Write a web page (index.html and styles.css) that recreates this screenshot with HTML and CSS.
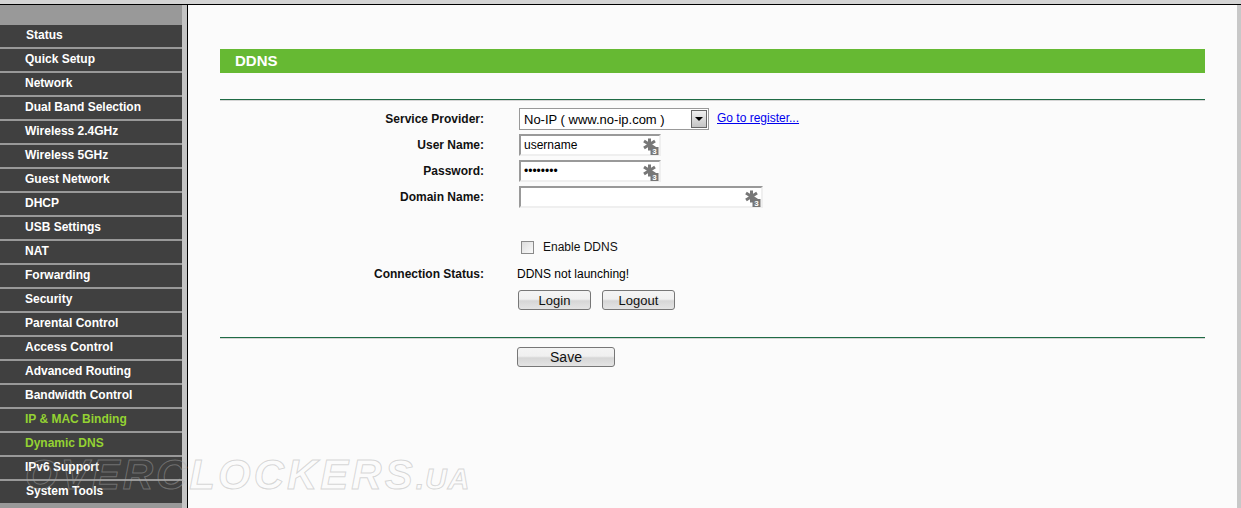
FILE: index.html
```html
<!DOCTYPE html>
<html lang="en">
<head>
    <meta charset="UTF-8">
    <meta name="viewport" content="width=device-width, initial-scale=1.0">
    <title>DDNS</title>
    <link rel="stylesheet" href="styles.css">
</head>
<body>

    <svg width="0" height="0" class="defs">
        <symbol id="key3" viewBox="0 0 16 17">
            <path d="M6.5 0.5v12M1 3l11 7M12 3L1 10" stroke="#777" stroke-width="3" fill="none"/>
            <rect x="7.5" y="9" width="8" height="8" fill="#777"/>
            <text x="11.5" y="16" text-anchor="middle" class="key-num">3</text>
        </symbol>
    </svg>

    <div class="frame">
        <nav class="sidebar">
            <ul class="menu">
                <li class="menu-item shift">Status</li>
                <li class="menu-item">Quick Setup</li>
                <li class="menu-item">Network</li>
                <li class="menu-item">Dual Band Selection</li>
                <li class="menu-item">Wireless 2.4GHz</li>
                <li class="menu-item">Wireless 5GHz</li>
                <li class="menu-item">Guest Network</li>
                <li class="menu-item">DHCP</li>
                <li class="menu-item">USB Settings</li>
                <li class="menu-item">NAT</li>
                <li class="menu-item">Forwarding</li>
                <li class="menu-item">Security</li>
                <li class="menu-item">Parental Control</li>
                <li class="menu-item">Access Control</li>
                <li class="menu-item">Advanced Routing</li>
                <li class="menu-item">Bandwidth Control</li>
                <li class="menu-item active">IP &amp; MAC Binding</li>
                <li class="menu-item active">Dynamic DNS</li>
                <li class="menu-item">IPv6 Support</li>
                <li class="menu-item shift">System Tools</li>
            </ul>
        </nav>

        <main class="content">
            <h1 class="title">DDNS</h1>
            <hr class="rule rule-top">

            <form class="form">
                <div class="row row-provider">
                    <label class="label">Service Provider:</label>
                    <div class="select">
                        <span class="select-text">No-IP ( www.no-ip.com )</span>
                        <span class="select-arrow"></span>
                    </div>
                    <a href="#" class="register">Go to register...</a>
                </div>
                <div class="row">
                    <label class="label">User Name:</label>
                    <div class="field">
                        <input type="text" class="input" value="username">
                        <svg class="key"><use href="#key3"/></svg>
                    </div>
                </div>
                <div class="row">
                    <label class="label">Password:</label>
                    <div class="field">
                        <input type="password" class="input" value="password">
                        <svg class="key"><use href="#key3"/></svg>
                    </div>
                </div>
                <div class="row">
                    <label class="label">Domain Name:</label>
                    <div class="field field-wide">
                        <input type="text" class="input">
                        <svg class="key"><use href="#key3"/></svg>
                    </div>
                </div>

                <div class="row row-enable">
                    <span class="label"></span>
                    <span class="checkbox"></span>
                    <span class="check-text">Enable DDNS</span>
                </div>
                <div class="row row-status">
                    <span class="label">Connection Status:</span>
                    <span class="status-text">DDNS not launching!</span>
                </div>
                <div class="row row-buttons">
                    <span class="label"></span>
                    <button type="button" class="btn">Login</button>
                    <button type="button" class="btn">Logout</button>
                </div>
            </form>

            <hr class="rule rule-bottom">

            <div class="save-row">
                <button type="button" class="btn btn-save">Save</button>
            </div>
        </main>
    </div>

    <div class="watermark">OVERCLOCKERS<span class="watermark-small">.UA</span></div>

</body>
</html>
```

FILE: styles.css
```css
* {
    margin: 0;
    padding: 0;
    box-sizing: border-box;
}
html, body {
    height: 100%;
    overflow: hidden;
}
body {
    font-family: "Liberation Sans", Arial, sans-serif;
    font-size: 12px;
    color: #000;
    background-color: #d4d4d4;
    padding-top: 4px;
}
.defs {
    position: absolute;
}
.key-num {
    font-family: "Liberation Sans", Arial, sans-serif;
    font-size: 8px;
    font-weight: bold;
    fill: #fff;
}
.frame {
    display: flex;
    height: 504px;
    border-top: 1px solid #000;
    padding-right: 4px;
    background-color: #c8c8c8;
}
.sidebar {
    width: 188px;
    flex-shrink: 0;
    background-color: #999;
    border-right: 1px solid #000;
}
.menu {
    list-style: none;
    width: 182px;
    padding-top: 20px;
    background-color: #999;
    height: 100%;
}
.menu-item {
    height: 22px;
    margin-bottom: 2px;
    padding-left: 25px;
    line-height: 21px;
    background-color: #404040;
    color: #fff;
    font-weight: bold;
}
.menu-item.shift {
    padding-left: 26px;
}
.menu-item.active {
    color: #94d232;
}
.sidebar {
    background-color: #c4c4c4;
}
.content {
    flex: 1;
    background-color: #fbfbfb;
    padding: 44px 32px 0;
}
.title {
    height: 24px;
    padding-left: 15px;
    line-height: 23px;
    font-size: 15px;
    font-weight: bold;
    color: #fff;
    background-color: #66b933;
}
.rule {
    border: none;
    height: 2px;
    border-top: 1px solid #1f6b45;
    border-bottom: 1px solid #d5d5d5;
}
.rule-top {
    margin-top: 26px;
}
.rule-bottom {
    margin-top: 27px;
}
.form {
    padding-top: 7px;
}
.row {
    display: flex;
    align-items: center;
    height: 22px;
    margin-bottom: 4px;
}
.label {
    width: 264px;
    margin-right: 35px;
    flex-shrink: 0;
    text-align: right;
    font-weight: bold;
    color: #111;
}
.select {
    display: flex;
    align-items: center;
    width: 190px;
    height: 22px;
    border: 1px solid #999;
    background-color: #fff;
    font-size: 13px;
    padding-left: 4px;
}
.select-text {
    flex: 1;
}
.select-arrow {
    position: relative;
    width: 16px;
    height: 18px;
    margin-right: 1px;
    border: 1px solid #666;
    background: linear-gradient(#f0f0f0, #c4c4c4);
}
.select-arrow::after {
    content: "";
    position: absolute;
    left: 3px;
    top: 6px;
    border-left: 4px solid transparent;
    border-right: 4px solid transparent;
    border-top: 4px solid #000;
}
.register {
    margin: 0 0 2px 8px;
    color: #0000ee;
}
.field {
    position: relative;
    width: 142px;
    height: 22px;
}
.field-wide {
    width: 244px;
}
.input {
    display: block;
    width: 100%;
    height: 100%;
    padding-left: 3px;
    border-style: solid;
    border-width: 2px;
    border-color: #999 #efefef #efefef #999;
    background-color: #fff;
    font-family: "Liberation Sans", Arial, sans-serif;
    font-size: 12px;
    color: #000;
}
.key {
    position: absolute;
    right: 2px;
    top: 4px;
    width: 16px;
    height: 17px;
}
.row-enable {
    margin-top: 28px;
    margin-bottom: 5px;
}
.checkbox {
    width: 13px;
    height: 13px;
    margin: 0 9px 0 2px;
    border: 1px solid #8a8a8a;
    background: linear-gradient(135deg, #dcdcdc, #fafafa);
}
.check-text {
    color: #111;
}
.row-status {
    height: 22px;
    margin-bottom: 5px;
}
.row-status .label {
    margin-right: 33px;
}
.row-buttons {
    height: 20px;
    margin-bottom: 0;
}
.row-buttons .label {
    margin-right: 34px;
}
.btn {
    width: 73px;
    height: 20px;
    margin-right: 11px;
    border: 1px solid #777;
    border-radius: 3px;
    background: linear-gradient(#f4f4f4, #f0f0f0 45%, #d6d6d6 55%, #e4e4e4);
    font-family: "Liberation Sans", Arial, sans-serif;
    font-size: 13px;
    color: #111;
}
.save-row {
    padding: 8px 0 0 297px;
}
.btn-save {
    width: 98px;
    font-size: 14px;
}
.watermark {
    position: absolute;
    left: 25px;
    top: 452px;
    font-size: 42px;
    line-height: 46px;
    font-weight: bold;
    font-style: italic;
    letter-spacing: 3px;
    white-space: nowrap;
    color: transparent;
    -webkit-text-stroke: 1px rgba(170, 170, 170, 0.45);
    pointer-events: none;
}
.watermark-small {
    font-size: 30px;
    letter-spacing: 1px;
}
```
